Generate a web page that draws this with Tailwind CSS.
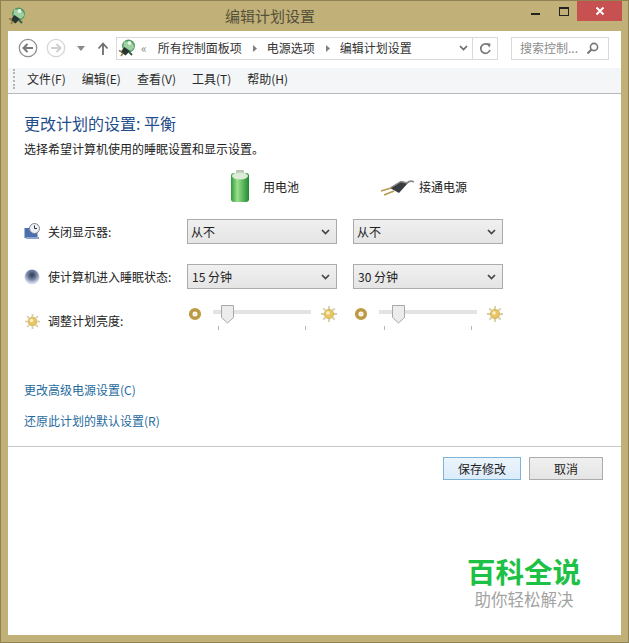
<!DOCTYPE html>
<html lang="zh-CN">
<head>
<meta charset="UTF-8">
<title>编辑计划设置</title>
<script src="https://cdn.jsdelivr.net/npm/@tailwindcss/browser@4"></script>
</head>
<body class="m-0 bg-[#c1b179]">
<svg width="0" height="0" class="absolute">
  <defs>
    <symbol id="power" viewBox="0 0 18 18">
      <circle cx="10.5" cy="7" r="6.5" fill="#4f9a62"/>
      <path d="M6 2.5h6l3 2.5 1.5 3-3 3.5-5 .5-3-4z" fill="#9fd0a2"/>
      <circle cx="11.5" cy="4" r="1.9" fill="#e8f5e8"/>
      <path d="M2.5 13l4-5 5.5 4-4.5 4.5z" fill="#2b3530"/>
      <path d="M1 11.5l3 1.5M3 17l2-3" stroke="#8b7a42" stroke-width="1.5"/>
      <path d="M11 13l3 3" stroke="#3a5f48" stroke-width="2"/>
    </symbol>
    <symbol id="sun" viewBox="0 0 18 18">
      <path d="M9 1v3M9 14v3M1 9h3M14 9h3M3.3 3.3l2.2 2.2M12.5 12.5l2.2 2.2M14.7 3.3l-2.2 2.2M5.5 12.5l-2.2 2.2" stroke="#d6cfa6" stroke-width="1.8"/>
      <circle cx="9" cy="9" r="4.6" fill="#e8c668" stroke="#cba848" stroke-width="0.8"/>
      <circle cx="8" cy="8" r="1.8" fill="#faf0c4"/>
    </symbol>
    <symbol id="sunlow" viewBox="0 0 14 14">
      <circle cx="7" cy="7" r="4.3" fill="none" stroke="#bd9b45" stroke-width="3.6"/>
      <circle cx="7" cy="7" r="1.6" fill="#f4ecd0"/>
    </symbol>
  </defs>
</svg>

<div class="w-[629px] h-[643px] flex flex-col bg-[#c1b179] border border-[#8f8354] overflow-hidden font-['Noto_Sans_CJK_SC','Noto_Sans',sans-serif] text-[12px] text-[#222]">

  <!-- title bar -->
  <div class="h-[30px] shrink-0 flex items-start">
    <svg class="w-[18px] h-[18px] ml-[7px] mt-[6px]"><use href="#power"/></svg>
    <div class="ml-[199px] mt-[4px] text-[15px] leading-[22px] text-[#55503a]">编辑计划设置</div>
    <div class="ml-auto flex items-start mr-[6px]">
      <svg class="mt-[11px] mr-[19px]" width="9" height="3"><rect width="9" height="2" y="1" fill="#222"/></svg>
      <svg class="mt-[6px] mr-[8px]" width="10" height="9"><rect x="0.5" y="0.5" width="9" height="8" fill="none" stroke="#222"/><rect width="10" height="2" fill="#222"/></svg>
      <div class="w-[45px] h-[20px] bg-[#c75050] flex items-center justify-center">
        <svg width="10" height="10" viewBox="0 0 10 10"><path d="M1.5 1.5l7 7M8.5 1.5l-7 7" stroke="#fff" stroke-width="2"/></svg>
      </div>
    </div>
  </div>

  <!-- window body -->
  <div class="w-[613px] ml-[7px] bg-white flex flex-col h-[604px]">

    <!-- address row -->
    <div class="h-[37px] shrink-0 flex items-center pb-[3px]">
      <svg class="ml-[10px]" width="20" height="20" viewBox="0 0 20 20"><circle cx="10" cy="10" r="8.7" fill="#fff" stroke="#8f8f8f" stroke-width="1.3"/><path d="M15 10H6M9.5 6L5.5 10l4 4" fill="none" stroke="#777" stroke-width="2"/></svg>
      <svg class="ml-[8px]" width="20" height="20" viewBox="0 0 20 20"><circle cx="10" cy="10" r="8.7" fill="#fff" stroke="#d6d6d6" stroke-width="1.3"/><path d="M5 10h9M10.5 6l4 4-4 4" fill="none" stroke="#cfcfcf" stroke-width="2"/></svg>
      <svg class="ml-[11px]" width="8" height="5"><path d="M0 0h8L4 5z" fill="#8a8a8a"/></svg>
      <svg class="ml-[12px]" width="12" height="13" viewBox="0 0 12 13"><path d="M6 13V2M1.5 6.5L6 1.5l4.5 5" fill="none" stroke="#6e6e6e" stroke-width="1.8"/></svg>
      <div class="ml-[7px] w-[382px] h-[23px] border border-[#d9d9d9] flex items-center">
        <svg class="ml-[1px]" width="18" height="18"><use href="#power"/></svg>
        <span class="ml-[5px] text-[#8a8a8a] text-[12px] leading-none">«</span>
        <span class="ml-[11px] text-[#333]">所有控制面板项</span>
        <svg class="ml-[11px]" width="4" height="7"><path d="M0 0l4 3.5L0 7z" fill="#808080"/></svg>
        <span class="ml-[10px] text-[#333]">电源选项</span>
        <svg class="ml-[11px]" width="4" height="7"><path d="M0 0l4 3.5L0 7z" fill="#808080"/></svg>
        <span class="ml-[10px] text-[#333]">编辑计划设置</span>
        <svg class="ml-auto" width="9" height="6" viewBox="0 0 9 6"><path d="M1 1l3.5 3.5L8 1" fill="none" stroke="#666" stroke-width="1.6"/></svg>
        <div class="ml-[4px] h-full w-[25px] border-l border-[#d9d9d9] flex items-center justify-center">
          <svg width="13" height="13" viewBox="0 0 13 13"><path d="M10.6 4.2A4.7 4.7 0 1 0 11 8" fill="none" stroke="#7a7a7a" stroke-width="1.7"/><path d="M7.5 1.2l4 .2-.6 4z" fill="#7a7a7a"/></svg>
        </div>
      </div>
      <div class="ml-[13px] w-[98px] h-[23px] border border-[#d9d9d9] flex items-center pl-[8px] text-[#8c8c8c]">
        <span>搜索控制...</span>
        <svg class="ml-[8px]" width="13" height="13" viewBox="0 0 13 13"><circle cx="8" cy="5" r="3.6" fill="none" stroke="#777" stroke-width="1.6"/><path d="M5.5 7.5L1.5 11.5" stroke="#777" stroke-width="2.2"/></svg>
      </div>
    </div>

    <!-- menu bar -->
    <div class="h-[26px] shrink-0 flex items-center pb-[3px] bg-gradient-to-b from-[#f3f6f8] to-[#f5f6f7] border-b border-[#b8b8b8]">
      <div class="ml-[5px] w-[2px] h-[20px] border-l-2 border-dotted border-[#b5b5b5]"></div>
      <div class="ml-[12px] flex gap-[16px] text-[#2a2a2a]">
        <span>文件(F)</span><span>编辑(E)</span><span>查看(V)</span><span>工具(T)</span><span>帮助(H)</span>
      </div>
    </div>

    <!-- content -->
    <div class="pl-[16px] pt-[18px]">
      <h1 class="text-[16px] leading-[22px] font-normal text-[#1f4e8c]">更改计划的设置: 平衡</h1>
      <p class="mt-[7px] leading-[16px] text-[#222]">选择希望计算机使用的睡眠设置和显示设置。</p>

      <div class="mt-[11px] grid grid-cols-[147px_150px_150px] gap-x-[16px]">
        <!-- column headers -->
        <div></div>
        <div class="h-[37px] flex items-center pl-[43px]">
          <svg width="20" height="33" viewBox="0 0 20 33">
            <defs><linearGradient id="bat" x1="0" x2="1" y1="0" y2="0"><stop offset="0" stop-color="#2f9a3a"/><stop offset=".35" stop-color="#9be08a"/><stop offset="1" stop-color="#1e8a33"/></linearGradient></defs>
            <rect x="6" y="0" width="8" height="4" rx="1" fill="#b9c9b6"/>
            <path d="M1 6q0-3 3-3h12q3 0 3 3v23q0 3-3 3H4q-3 0-3-3z" fill="url(#bat)"/>
            <ellipse cx="10" cy="6" rx="8" ry="3.4" fill="#dcecd8"/>
          </svg>
          <span class="ml-[13px] text-[#222]">用电池</span>
        </div>
        <div class="h-[37px] flex items-center pl-[27px]">
          <svg width="34" height="20" viewBox="0 0 34 20">
            <path d="M10 11L21 4l7 2-9 10z" fill="#3a3d40"/>
            <path d="M11 10.5L21 4.5l6 1.5" fill="none" stroke="#8a8e92" stroke-width="1.4"/>
            <path d="M27 6q3-3 7-1" fill="none" stroke="#8a8a8a" stroke-width="1.8"/>
            <path d="M1 14l10-3M4 18l10-4" stroke="#b99a50" stroke-width="1.6"/>
          </svg>
          <span class="ml-[5px] text-[#222]">接通电源</span>
        </div>

        <!-- turn off display -->
        <div class="mt-[14px] h-[25px] flex items-center">
          <svg width="17" height="17" viewBox="0 0 17 17"><rect x="0.5" y="5" width="13" height="10" fill="#4b6fae"/><circle cx="10.5" cy="5.5" r="5" fill="#eef0f4" stroke="#7a8498"/><path d="M10.5 2.5v3h2.5" fill="none" stroke="#333"/><rect x="2" y="14" width="13" height="2" fill="#8fa6cc"/></svg>
          <span class="ml-[7px]">关闭显示器:</span>
        </div>
        <div class="mt-[14px] h-[25px] border border-[#acacac] bg-gradient-to-b from-[#f0f0f0] to-[#e5e5e5] flex items-center justify-between pl-[3px] pr-[6px]">
          <span>从不</span>
          <svg width="9" height="6" viewBox="0 0 9 6"><path d="M1 1l3.5 3.5L8 1" fill="none" stroke="#444" stroke-width="1.7"/></svg>
        </div>
        <div class="mt-[14px] h-[25px] border border-[#acacac] bg-gradient-to-b from-[#f0f0f0] to-[#e5e5e5] flex items-center justify-between pl-[3px] pr-[6px]">
          <span>从不</span>
          <svg width="9" height="6" viewBox="0 0 9 6"><path d="M1 1l3.5 3.5L8 1" fill="none" stroke="#444" stroke-width="1.7"/></svg>
        </div>

        <!-- sleep -->
        <div class="mt-[20px] h-[25px] flex items-center">
          <svg class="shrink-0" width="16" height="16" viewBox="0 0 16 16"><defs><radialGradient id="moon" cx=".5" cy=".36" r=".66"><stop offset="0" stop-color="#2c3650"/><stop offset=".45" stop-color="#6f80a0"/><stop offset=".8" stop-color="#c9d3e2"/><stop offset="1" stop-color="#e6ebf2"/></radialGradient></defs><circle cx="8" cy="8" r="7.5" fill="url(#moon)"/></svg>
          <span class="ml-[8px] whitespace-nowrap">使计算机进入睡眠状态:</span>
        </div>
        <div class="mt-[20px] h-[25px] border border-[#acacac] bg-gradient-to-b from-[#f0f0f0] to-[#e5e5e5] flex items-center justify-between pl-[4px] pr-[6px]">
          <span>15 分钟</span>
          <svg width="9" height="6" viewBox="0 0 9 6"><path d="M1 1l3.5 3.5L8 1" fill="none" stroke="#444" stroke-width="1.7"/></svg>
        </div>
        <div class="mt-[20px] h-[25px] border border-[#acacac] bg-gradient-to-b from-[#f0f0f0] to-[#e5e5e5] flex items-center justify-between pl-[4px] pr-[6px]">
          <span>30 分钟</span>
          <svg width="9" height="6" viewBox="0 0 9 6"><path d="M1 1l3.5 3.5L8 1" fill="none" stroke="#444" stroke-width="1.7"/></svg>
        </div>

        <!-- brightness -->
        <div class="mt-[19px] h-[26px] flex items-center">
          <svg width="17" height="17"><use href="#sun"/></svg>
          <span class="ml-[7px]">调整计划亮度:</span>
        </div>
        <div class="mt-[16px] h-[26px] flex items-start">
          <svg class="mt-[2px] ml-[1px] shrink-0" width="14" height="14"><use href="#sunlow"/></svg>
          <div class="relative ml-[11px] w-[98px] h-[26px] shrink-0">
            <div class="absolute left-0 right-0 top-[5px] h-[4px] bg-[#e3e3e3]"></div>
            <svg class="absolute left-[8px] top-0" width="13" height="19" viewBox="0 0 13 19"><path d="M.5.5h12v12l-6 5.5-6-5.5z" fill="#ececec" stroke="#a8a8a8"/></svg>
            <div class="absolute left-[5px] top-[21px] w-px h-[4px] bg-[#b5b5b5]"></div>
            <div class="absolute left-[92px] top-[21px] w-px h-[4px] bg-[#b5b5b5]"></div>
          </div>
          <svg class="ml-[9px] shrink-0" width="18" height="18"><use href="#sun"/></svg>
        </div>
        <div class="mt-[16px] h-[26px] flex items-start">
          <svg class="mt-[2px] ml-[1px] shrink-0" width="14" height="14"><use href="#sunlow"/></svg>
          <div class="relative ml-[11px] w-[98px] h-[26px] shrink-0">
            <div class="absolute left-0 right-0 top-[5px] h-[4px] bg-[#e3e3e3]"></div>
            <svg class="absolute left-[13px] top-0" width="13" height="19" viewBox="0 0 13 19"><path d="M.5.5h12v12l-6 5.5-6-5.5z" fill="#ececec" stroke="#a8a8a8"/></svg>
            <div class="absolute left-[5px] top-[21px] w-px h-[4px] bg-[#b5b5b5]"></div>
            <div class="absolute left-[92px] top-[21px] w-px h-[4px] bg-[#b5b5b5]"></div>
          </div>
          <svg class="ml-[9px] shrink-0" width="18" height="18"><use href="#sun"/></svg>
        </div>
      </div>

      <div class="mt-[48px] text-[#1f6b9e] leading-[16px]">更改高级电源设置(C)</div>
      <div class="mt-[15px] text-[#1f6b9e] leading-[16px]">还原此计划的默认设置(R)</div>
    </div>

    <!-- buttons -->
    <div class="mt-[17px] border-t border-[#c8c8c8] flex justify-end gap-[8px] pt-[10px] pr-[18px]">
      <div class="w-[78px] h-[23px] border border-[#7eb4d6] bg-gradient-to-b from-[#ecf4fc] to-[#dcecfb] flex items-center justify-center text-[#222]">保存修改</div>
      <div class="w-[74px] h-[23px] border border-[#acacac] bg-gradient-to-b from-[#f0f0f0] to-[#e5e5e5] flex items-center justify-center text-[#222]">取消</div>
    </div>

    <!-- watermark -->
    <div class="mt-[77px] ml-[459px] w-[114px] flex flex-col items-center font-['Liberation_Sans','Noto_Sans_CJK_SC',sans-serif]">
      <div class="text-[28.5px] leading-[33px] font-bold text-[#1dc145] whitespace-nowrap">百科全说</div>
      <div class="text-[16.5px] leading-[21px] text-[#a3a3a3] whitespace-nowrap">助你轻松解决</div>
    </div>
  </div>
</div>
</body>
</html>
